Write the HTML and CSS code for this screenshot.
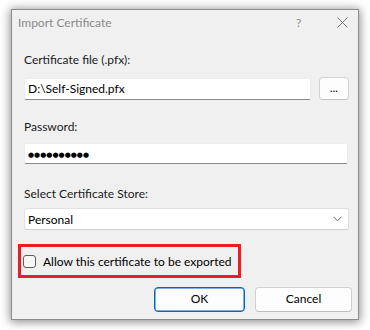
FILE: index.html
```html
<!DOCTYPE html>
<html>
<head>
<meta charset="utf-8">
<link rel="stylesheet" href="styles.css">
</head>
<body>
<div class="window">
  <div class="titlebar">
    <span class="title">Import Certificate</span>
    <span class="help">?</span>
    <svg class="close" width="11" height="11" viewBox="0 0 11 11"><path d="M0.5 0.5 L10.5 10.5 M10.5 0.5 L0.5 10.5" stroke="#7a7a7a" stroke-width="1" fill="none"/></svg>
  </div>
  <div class="content">
    <div class="label l1">Certificate file (.pfx):</div>
    <div class="row r1">
      <div class="field file">D:\Self-Signed.pfx</div>
      <div class="browse">...</div>
    </div>
    <div class="label l2">Password:</div>
    <div class="field pw"><span class="dots">●●●●●●●●●●</span></div>
    <div class="label l3">Select Certificate Store:</div>
    <div class="select">
      <span>Personal</span>
      <svg class="chev" width="9" height="6" viewBox="0 0 9 6"><path d="M0.5 0.8 L4.5 4.8 L8.5 0.8" stroke="#606060" stroke-width="1" fill="none"/></svg>
    </div>
    <div class="highlight">
      <span class="check"></span>
      <span class="ctext">Allow this certificate to be exported</span>
    </div>
    <div class="buttons">
      <div class="btn ok">OK</div>
      <div class="btn cancel">Cancel</div>
    </div>
  </div>
</div>
</body>
</html>
```
FILE: styles.css
```css
html, body {
  margin: 0;
  padding: 0;
  background: #ffffff;
}
body {
  padding: 9px 11px;
  font-family: "Lato", "Noto Sans", sans-serif;
  font-size: 12px;
  color: #1b1b1b;
  white-space: nowrap;
}
.window {
  box-sizing: border-box;
  width: 348px;
  height: 311px;
  background: #f0f0f0;
  border: 1px solid #8c8c8c;
  box-shadow: 0 1px 9px 1px rgba(0, 0, 0, 0.45);
}
.titlebar {
  box-sizing: border-box;
  height: 30px;
  padding: 5px 0 0 6px;
  display: flex;
  align-items: flex-start;
  line-height: 16px;
  color: #8a8a8a;
}
.title {
  flex: 1;
}
.help {
  width: 10px;
  margin-right: 31px;
}
.close {
  margin-top: 2px;
  margin-right: 10px;
}
.content {
  padding: 0 9px 0 12px;
}
.label {
  line-height: 16px;
  height: 16px;
}
.l1 { margin-top: 12px; }
.l2 { margin-top: 19px; }
.l3 { margin-top: 22px; }
.row {
  display: flex;
  margin-top: 10px;
}
.field {
  box-sizing: border-box;
  background: #ffffff;
  border: 1px solid #ececec;
  border-bottom: 1px solid #8a8a8a;
  border-radius: 2px;
  line-height: 20px;
  padding: 0 3px;
  color: #000;
}
.file {
  width: 287px;
  height: 22px;
}
.browse {
  box-sizing: border-box;
  width: 30px;
  height: 23px;
  margin-left: 8px;
  margin-top: -1px;
  background: #fdfdfd;
  border: 1px solid #d3d3d3;
  border-bottom-color: #c2c2c2;
  border-radius: 4px;
  text-align: center;
  line-height: 20px;
  font-size: 11px;
  color: #000;
}
.pw {
  margin-top: 8px;
  width: 324px;
  height: 21px;
  line-height: 19px;
}
.dots {
  font-family: "DejaVu Sans", sans-serif;
  font-size: 7px;
  letter-spacing: 0px;
  vertical-align: 1px;
}
.select {
  box-sizing: border-box;
  margin-top: 6px;
  width: 325px;
  height: 22px;
  background: #ffffff;
  border: 1px solid #e0e0e0;
  border-bottom-color: #d0d0d0;
  border-radius: 3px;
  display: flex;
  align-items: center;
  justify-content: space-between;
  padding: 0 5px 0 3px;
  color: #000;
}
.chev {
  margin-right: 1px;
}
.highlight {
  box-sizing: border-box;
  margin-top: 14px;
  margin-left: -6px;
  width: 223px;
  height: 34px;
  border: 3px solid #ec1c24;
  display: flex;
  align-items: center;
  padding: 1px 0 0 2px;
}
.check {
  box-sizing: border-box;
  width: 13px;
  height: 13px;
  border: 1px solid #5e5e5e;
  border-radius: 3px;
  background: #f6f6f6;
  margin-right: 7px;
}
.ctext {
  color: #000;
  line-height: 16px;
}
.buttons {
  margin-top: 9px;
  margin-right: -3px;
  display: flex;
  justify-content: flex-end;
  gap: 10px;
}
.btn {
  box-sizing: border-box;
  height: 25px;
  border-radius: 4px;
  background: #fdfdfd;
  text-align: center;
  line-height: 22px;
  color: #000;
}
.ok {
  width: 91px;
  border: 1px solid #0067c0;
  box-shadow: inset 0 0 0 0.5px #0067c0;
}
.cancel {
  width: 97px;
  border: 1px solid #d0d0d0;
  border-bottom-color: #bdbdbd;
}
```
